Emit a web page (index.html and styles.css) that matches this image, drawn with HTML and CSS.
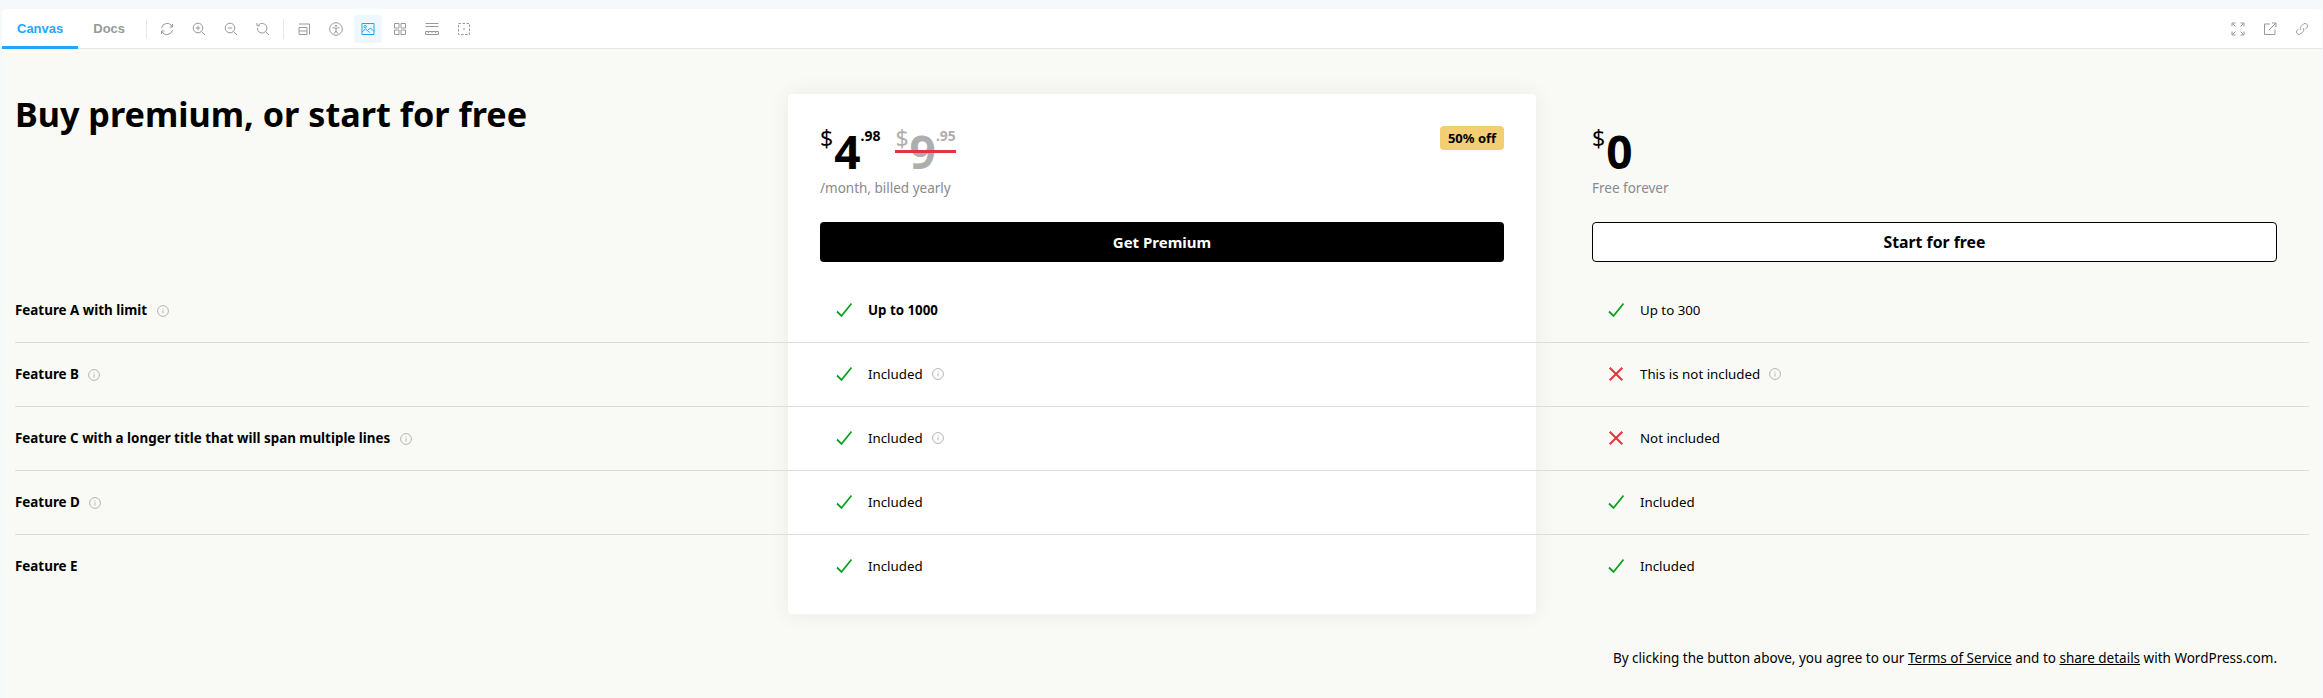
FILE: index.html
```html
<!DOCTYPE html>
<html lang="en">
<head>
    <meta charset="UTF-8">
    <meta name="viewport" content="width=device-width, initial-scale=1.0">
    <title>Pricing table - Canvas</title>
    <link rel="stylesheet" href="styles.css">
</head>
<body>

    <svg class="icon-defs" width="0" height="0">
        <symbol id="info" viewBox="0 0 12 12">
            <circle cx="6" cy="6" r="5.4" fill="none" stroke="currentColor" stroke-width="1"/>
            <path d="M6 5.4v3M6 3.4v1" fill="none" stroke="currentColor" stroke-width="1"/>
        </symbol>
        <symbol id="check" viewBox="0 0 16 16">
            <path d="M1 9.500l4.500 4.500L15.500 1.500" fill="none" stroke="currentColor" stroke-width="1.800"/>
        </symbol>
        <symbol id="cross" viewBox="0 0 14 14">
            <path d="M1.500 1.500l11 11M12.500 1.500l-11 11" fill="none" stroke="currentColor" stroke-width="1.800"/>
        </symbol>
    </svg>

    <div class="frame">

        <!-- Toolbar -->
        <div class="toolbar">
            <a class="tab tab-active">Canvas</a>
            <a class="tab">Docs</a>
            <span class="tool-divider"></span>
            <span class="tool"><svg viewBox="0 0 14 14"><path d="M1.500 6A5.600 5.600 0 0 1 12 4.500M12.500 8A5.600 5.600 0 0 1 2 9.500"/><path d="M12.500 2v3h-3M1.500 12V9h3"/></svg></span>
            <span class="tool"><svg viewBox="0 0 14 14"><circle cx="6" cy="6" r="4.800"/><path d="M9.500 9.500L13 13M6 3.800v4.400M3.800 6h4.400"/></svg></span>
            <span class="tool"><svg viewBox="0 0 14 14"><circle cx="6" cy="6" r="4.800"/><path d="M9.500 9.500L13 13M3.800 6h4.400"/></svg></span>
            <span class="tool"><svg viewBox="0 0 14 14"><path d="M2.500 3A4.800 4.800 0 1 1 1.300 6"/><path d="M9.500 9.500L13 13M1 1v2.800h2.800"/></svg></span>
            <span class="tool-divider"></span>
            <span class="tool"><svg viewBox="0 0 14 14"><path d="M2 5.500h8v7H2zM2 9h8M2 2h10.500v10.500"/></svg></span>
            <span class="tool"><svg viewBox="0 0 14 14"><circle cx="7" cy="7" r="6.300"/><circle class="solid" cx="7" cy="3.800" r="1"/><path d="M3.800 5.600L7 6.300l3.200-.7M7 6.300v2.500M7 8.800l-1.800 2.800M7 8.800l1.800 2.800"/></svg></span>
            <span class="tool tool-active"><svg viewBox="0 0 14 14"><path d="M1 1.500h12v11H1z"/><circle cx="4.200" cy="4.600" r="1.200"/><path d="M1 10l3.500-3 4 3.500M7 8l2.500-2L13 9.500"/></svg></span>
            <span class="tool"><svg viewBox="0 0 14 14"><path d="M1.500 1.500h4.500v4.500H1.500zM8 1.500h4.500v4.500H8zM1.500 8h4.500v4.500H1.500zM8 8h4.500v4.500H8z"/></svg></span>
            <span class="tool"><svg viewBox="0 0 14 14"><path d="M.5 1.500h13M.5 4.500h13M.5 9.500h13v3H.5zM3.500 9.500v1.500M7 9.500v1.500M10.500 9.500v1.500"/></svg></span>
            <span class="tool"><svg viewBox="0 0 14 14"><path stroke-dasharray="2.500 1.500" d="M1.500 1.500h11v11h-11z"/><path d="M7 6v2"/></svg></span>

            <span class="toolbar-right">
                <span class="tool"><svg viewBox="0 0 14 14"><path d="M1 4.500V1h3.500M13 4.500V1H9.500M1 9.500V13h3.500M13 9.500V13H9.500M1.500 1.500l3 3M12.500 1.500l-3 3M1.500 12.500l3-3M12.500 12.500l-3-3"/></svg></span>
                <span class="tool"><svg viewBox="0 0 14 14"><path d="M7 2H1.500v10.500H12V7.500M6 8l7-7M9 1h4v4"/></svg></span>
                <span class="tool"><svg viewBox="0 0 14 14"><path d="M6 8c-1-1-1-2.500 0-3.500l2.500-2.500a2.500 2.500 0 0 1 3.500 3.500l-1.500 1.500M8 6c1 1 1 2.500 0 3.500L5.500 12A2.500 2.500 0 0 1 2 8.500l1.500-1.500"/></svg></span>
            </span>
        </div>

        <!-- Tabel harga -->
        <div class="canvas">
            <div class="pricing">
                <div class="card-bg"></div>

                <div class="pricing-head">
                    <h1 class="title">Buy premium, or start for free</h1>

                    <div class="plan plan-premium">
                        <div class="plan-top">
                            <div class="price-line">
                                <div class="price">
                                    <span class="currency">$</span><span class="amount">4</span><span class="cents">.98</span>
                                </div>
                                <div class="price price-old">
                                    <span class="currency">$</span><span class="amount">9</span><span class="cents">.95</span>
                                </div>
                            </div>
                            <span class="badge">50% off</span>
                        </div>
                        <div class="period">/month, billed yearly</div>
                        <button class="btn btn-dark">Get Premium</button>
                    </div>

                    <div class="plan plan-free">
                        <div class="plan-top">
                            <div class="price-line">
                                <div class="price">
                                    <span class="currency">$</span><span class="amount">0</span>
                                </div>
                            </div>
                        </div>
                        <div class="period">Free forever</div>
                        <button class="btn btn-light">Start for free</button>
                    </div>
                </div>

                <div class="row row-a">
                    <div class="feature">Feature A with limit <svg class="info"><use href="#info"/></svg></div>
                    <div class="cell cell-premium"><svg class="mark yes"><use href="#check"/></svg><strong>Up to 1000</strong></div>
                    <div class="cell cell-free"><svg class="mark yes"><use href="#check"/></svg>Up to 300</div>
                </div>
                <div class="row row-b">
                    <div class="feature">Feature B <svg class="info"><use href="#info"/></svg></div>
                    <div class="cell cell-premium"><svg class="mark yes"><use href="#check"/></svg>Included <svg class="info"><use href="#info"/></svg></div>
                    <div class="cell cell-free"><svg class="mark no"><use href="#cross"/></svg>This is not included <svg class="info"><use href="#info"/></svg></div>
                </div>
                <div class="row row-c">
                    <div class="feature">Feature C with a longer title that will span multiple lines <svg class="info"><use href="#info"/></svg></div>
                    <div class="cell cell-premium"><svg class="mark yes"><use href="#check"/></svg>Included <svg class="info"><use href="#info"/></svg></div>
                    <div class="cell cell-free"><svg class="mark no"><use href="#cross"/></svg>Not included</div>
                </div>
                <div class="row row-d">
                    <div class="feature">Feature D <svg class="info"><use href="#info"/></svg></div>
                    <div class="cell cell-premium"><svg class="mark yes"><use href="#check"/></svg>Included</div>
                    <div class="cell cell-free"><svg class="mark yes"><use href="#check"/></svg>Included</div>
                </div>
                <div class="row row-e">
                    <div class="feature">Feature E</div>
                    <div class="cell cell-premium"><svg class="mark yes"><use href="#check"/></svg>Included</div>
                    <div class="cell cell-free"><svg class="mark yes"><use href="#check"/></svg>Included</div>
                </div>
            </div>

            <p class="terms">By clicking the button above, you agree to our <a>Terms of Service</a> and to <a>share details</a> with WordPress.com.</p>
        </div>
    </div>

</body>
</html>
```

FILE: styles.css
```css
body {
    font-family: "Noto Sans", sans-serif;
    background-color: #f6f9fc;
    color: #000;
    margin: 0;
    padding: 0;
    height: 698px;
    overflow: hidden;
}

.icon-defs {
    display: block;
    height: 0;
}

.frame {
    margin: 9px 1px 0 2px;
    height: 689px;
    background-color: #f9faf6;
    border-radius: 4px 4px 0 0;
    overflow: hidden;
}

/* Toolbar */
.toolbar {
    display: flex;
    align-items: center;
    height: 39px;
    padding-right: 4px;
    background-color: #fff;
    border-bottom: 1px solid #e6e6e6;
    font-family: "Liberation Sans", Arial, sans-serif;
}

.tab {
    display: flex;
    align-items: center;
    justify-content: center;
    box-sizing: border-box;
    height: 40px;
    padding: 3px 15px 0;
    font-size: 13px;
    font-weight: 700;
    color: #999;
    border-bottom: 3px solid transparent;
}

.tab + .tab {
    margin-right: 2px;
}

.tab-active {
    color: #1ea7fd;
    border-bottom-color: #1ea7fd;
}

.tool-divider {
    width: 1px;
    height: 20px;
    margin: 0 4px;
    background-color: #e6e6e6;
}

.tool {
    display: flex;
    align-items: center;
    justify-content: center;
    width: 28px;
    height: 28px;
    margin: 0 2px;
    border-radius: 4px;
    color: #999;
}

.tool svg {
    width: 14px;
    height: 14px;
    fill: none;
    stroke: currentColor;
    stroke-width: 1;
}

.tool svg .solid {
    fill: currentColor;
    stroke: none;
}

.tool-active {
    color: #1ea7fd;
    background-color: #eef7fe;
}

.toolbar-right {
    display: flex;
    margin-left: auto;
}

/* Tabel harga */
.canvas {
    padding: 45px 13px 0 13px;
}

.pricing {
    display: grid;
    grid-template-columns: 773px 748px 773px;
    grid-template-rows: 185px repeat(5, 64px) 15px;
}

.card-bg {
    grid-column: 2;
    grid-row: 1 / -1;
    background-color: #fff;
    border-radius: 4px;
    box-shadow: 0 0 20px rgba(60, 60, 40, 0.08);
}

.pricing-head {
    grid-column: 1 / -1;
    grid-row: 1;
    display: grid;
    grid-template-columns: subgrid;
}

.title {
    margin: 0;
    font-size: 34.2px;
    line-height: 40px;
    font-weight: 700;
}

.plan {
    padding-top: 32px;
}

.plan-premium {
    padding-left: 32px;
    padding-right: 32px;
}

.plan-free {
    padding-left: 56px;
    padding-right: 32px;
}

.plan-top {
    display: flex;
    justify-content: space-between;
    align-items: flex-start;
    height: 48px;
}

.price-line {
    display: flex;
    gap: 15px;
}

.price {
    display: flex;
    align-items: flex-start;
    line-height: 1;
}

.currency {
    font-size: 23px;
    line-height: 24px;
    margin-right: 1px;
}

.amount {
    font-size: 46px;
    line-height: 50px;
    font-weight: 700;
}

.cents {
    font-size: 14px;
    line-height: 20px;
    font-weight: 700;
}

.price-old {
    position: relative;
    color: #aeaeae;
}

.price-old::after {
    content: "";
    position: absolute;
    left: 0;
    right: 0;
    top: 24px;
    height: 3px;
    background-color: #e2363f;
}

.badge {
    box-sizing: border-box;
    width: 64px;
    height: 24px;
    line-height: 24px;
    text-align: center;
    font-size: 13px;
    font-weight: 700;
    background-color: #f2cf75;
    border-radius: 4px;
}

.period {
    height: 24px;
    margin-bottom: 24px;
    line-height: 28px;
    font-size: 13.5px;
    color: #8a8a8e;
}

.btn {
    display: block;
    box-sizing: border-box;
    width: 100%;
    height: 40px;
    font-family: inherit;
    font-size: 15px;
    font-weight: 700;
    border-radius: 4px;
    cursor: pointer;
}

.btn-dark {
    background-color: #000;
    border: none;
    color: #fff;
}

.btn-light {
    background-color: #fff;
    border: 1.5px solid #000;
    color: #000;
    font-size: 15.8px;
}

.row {
    grid-column: 1 / -1;
    display: grid;
    grid-template-columns: subgrid;
    align-items: center;
    box-sizing: border-box;
    height: 64px;
    padding-bottom: 2px;
    border-bottom: 1px solid #dcdce2;
    font-size: 13.3px;
}

.row-a { grid-row: 2; }
.row-b { grid-row: 3; }
.row-c { grid-row: 4; }
.row-d { grid-row: 5; }

.row-e {
    grid-row: 6;
    border-bottom: none;
}

.feature {
    font-weight: 700;
    font-size: 13.4px;
}

.cell {
    display: flex;
    align-items: center;
}

.cell-premium {
    padding-left: 48px;
}

.cell-free {
    padding-left: 72px;
}

.mark {
    width: 16px;
    height: 16px;
    margin-right: 16px;
    flex: none;
}

.yes {
    color: #0f9d1e;
}

.no {
    color: #e2363f;
}

.info {
    width: 12px;
    height: 12px;
    margin-left: 6px;
    color: #b3b3b3;
    vertical-align: -2px;
}

.cell .info {
    margin-left: 9px;
}

.terms {
    margin: 35px 32px 0 0;
    text-align: right;
    font-size: 13.5px;
}

.terms a {
    text-decoration: underline;
}
```
